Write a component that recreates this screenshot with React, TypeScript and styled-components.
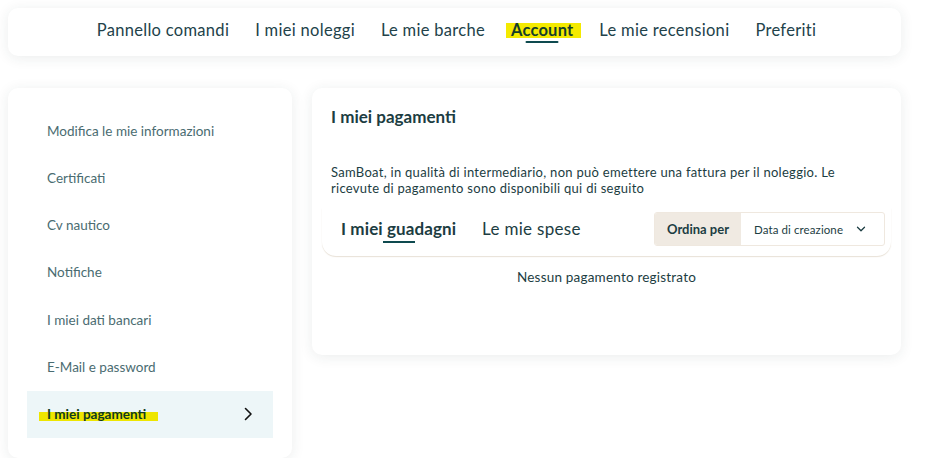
import React, { useState } from "react";
import styled, { createGlobalStyle, css } from "styled-components";

const GlobalStyle = createGlobalStyle`
  html, body {
    margin: 0;
    padding: 0;
    background: #ffffff;
    font-family: "Lato", "Liberation Sans", sans-serif;
    color: #1c3d42;
  }
  * {
    box-sizing: border-box;
  }
`;

const navItems = [
  "Pannello comandi",
  "I miei noleggi",
  "Le mie barche",
  "Account",
  "Le mie recensioni",
  "Preferiti",
];

const menuItems = [
  "Modifica le mie informazioni",
  "Certificati",
  "Cv nautico",
  "Notifiche",
  "I miei dati bancari",
  "E-Mail e password",
  "I miei pagamenti",
];

const App: React.FC = () => {
  const [tab, setTab] = useState(0);
  const activeNav = "Account";
  const activeMenu = "I miei pagamenti";

  return (
    <>
      <GlobalStyle />
      <Page>
        <TopNav>
          {navItems.map((item) => (
            <NavLink key={item} $active={item === activeNav}>
              <span>{item}</span>
            </NavLink>
          ))}
        </TopNav>

        <Content>
          <Sidebar>
            {menuItems.map((item) => (
              <MenuItem key={item} $active={item === activeMenu}>
                <span>{item}</span>
                {item === activeMenu && (
                  <svg width="14" height="14" viewBox="0 0 14 14" fill="none">
                    <path
                      d="M4.5 1.5 L10 7 L4.5 12.5"
                      stroke="#111"
                      strokeWidth="1.6"
                      strokeLinecap="round"
                      strokeLinejoin="round"
                    />
                  </svg>
                )}
              </MenuItem>
            ))}
          </Sidebar>

          <Panel>
            <PanelTitle>I miei pagamenti</PanelTitle>
            <Description>
              SamBoat, in qualità di intermediario, non può emettere una fattura
              per il noleggio. Le ricevute di pagamento sono disponibili qui di
              seguito
            </Description>

            <TabsBar>
              <Tabs>
                <Tab $active={tab === 0} onClick={() => setTab(0)}>
                  I miei guadagni
                </Tab>
                <Tab $active={tab === 1} onClick={() => setTab(1)}>
                  Le mie spese
                </Tab>
              </Tabs>
              <SortBox>
                <SortLabel>Ordina per</SortLabel>
                <SortSelect>
                  <span>Data di creazione</span>
                  <svg width="10" height="10" viewBox="0 0 10 10" fill="none">
                    <path
                      d="M1.5 3.2 L5 6.7 L8.5 3.2"
                      stroke="#1c3d42"
                      strokeWidth="1.3"
                      strokeLinecap="round"
                      strokeLinejoin="round"
                    />
                  </svg>
                </SortSelect>
              </SortBox>
            </TabsBar>

            <Empty>Nessun pagamento registrato</Empty>
          </Panel>
        </Content>
      </Page>
    </>
  );
};

export default App;

const Page = styled.div`
  width: 926px;
  padding: 8px 25px 0 8px;
`;

const card = css`
  background: #ffffff;
  border-radius: 10px;
  box-shadow: 0 2px 14px rgba(30, 50, 60, 0.09);
`;

const TopNav = styled.nav`
  ${card};
  height: 48px;
  display: flex;
  align-items: center;
  justify-content: center;
  gap: 26px;
  padding: 0 0 4px 4px;
`;

const NavLink = styled.a<{ $active: boolean }>`
  position: relative;
  font-size: 16.5px;
  letter-spacing: 0.3px;
  line-height: 20px;
  color: #22424a;
  cursor: pointer;
  span {
    position: relative;
    z-index: 1;
  }
  ${(p) =>
    p.$active &&
    css`
      font-weight: 700;
      letter-spacing: 0.2px;
      color: #153e2a;
      &:before {
        content: "";
        position: absolute;
        left: -5px;
        right: -8px;
        top: 3px;
        height: 15px;
        background: #f4ea00;
      }
      &:after {
        content: "";
        position: absolute;
        left: 50%;
        transform: translateX(-50%);
        bottom: -3px;
        width: 33px;
        height: 2px;
        border-radius: 1px;
        background: #0e4a4f;
      }
    `}
`;

const Content = styled.div`
  display: flex;
  align-items: flex-start;
  gap: 20px;
  margin-top: 32px;
`;

const Sidebar = styled.aside`
  ${card};
  width: 284px;
  height: 370px;
  padding: 19px 19px 20px 19px;
  display: flex;
  flex-direction: column;
  flex-shrink: 0;
`;

const MenuItem = styled.div<{ $active: boolean }>`
  height: 47.3px;
  display: flex;
  align-items: center;
  justify-content: space-between;
  padding: 0 18px 0 20px;
  font-size: 13.5px;
  color: #4a6c71;
  cursor: pointer;
  span {
    position: relative;
  }
  ${(p) =>
    p.$active &&
    css`
      background: #edf6f8;
      color: #0f3a22;
      font-weight: 700;
      span {
        z-index: 0;
        &:before {
          content: "";
          position: absolute;
          z-index: -1;
          left: -8px;
          right: -12px;
          top: 6px;
          height: 9px;
          background: #eee600;
        }
      }
    `}
`;

const Panel = styled.section`
  ${card};
  flex: 1;
  height: 267px;
  padding: 19px 10px 0 10px;
`;

const PanelTitle = styled.h2`
  margin: 0 0 0 9px;
  font-size: 17px;
  line-height: 20px;
  font-weight: 700;
  color: #1c3d42;
`;

const Description = styled.p`
  margin: 38px 0 0 9px;
  font-size: 13px;
  letter-spacing: 0.28px;
  line-height: 15.5px;
  color: #1c3d42;
  max-width: 520px;
`;

const TabsBar = styled.div`
  margin-top: 12px;
  height: 48px;
  display: flex;
  align-items: center;
  justify-content: space-between;
  padding: 0 6px 6px 19px;
  border-radius: 0 0 14px 14px;
  box-shadow: 0 1px 1px rgba(190, 170, 140, 0.35);
`;

const Tabs = styled.div`
  display: flex;
  gap: 26px;
`;

const Tab = styled.button<{ $active: boolean }>`
  position: relative;
  border: 0;
  background: none;
  padding: 0;
  font-family: inherit;
  font-size: 17px;
  line-height: 20px;
  letter-spacing: 0.3px;
  color: #1c3d42;
  cursor: pointer;
  font-weight: ${(p) => (p.$active ? 700 : 400)};
  ${(p) =>
    p.$active &&
    css`
      letter-spacing: 0.1px;
      &:after {
        content: "";
        position: absolute;
        left: 42px;
        bottom: -4px;
        width: 32px;
        height: 2px;
        background: #0e4a4f;
      }
    `}
`;

const SortBox = styled.div`
  display: flex;
  height: 34px;
  width: 231px;
  border: 1px solid #efe8df;
  border-radius: 3px;
  overflow: hidden;
`;

const SortLabel = styled.div`
  width: 86px;
  display: flex;
  align-items: center;
  justify-content: center;
  background: #f0eae2;
  font-size: 13px;
  font-weight: 700;
  color: #1c3d42;
`;

const SortSelect = styled.div`
  flex: 1;
  display: flex;
  align-items: center;
  justify-content: space-between;
  padding: 0 18px 0 13px;
  font-size: 11.5px;
  letter-spacing: 0.1px;
  color: #1c3d42;
`;

const Empty = styled.div`
  margin-top: 13px;
  text-align: center;
  font-size: 13.5px;
  letter-spacing: 0.2px;
  line-height: 16px;
  color: #1c3d42;
`;
